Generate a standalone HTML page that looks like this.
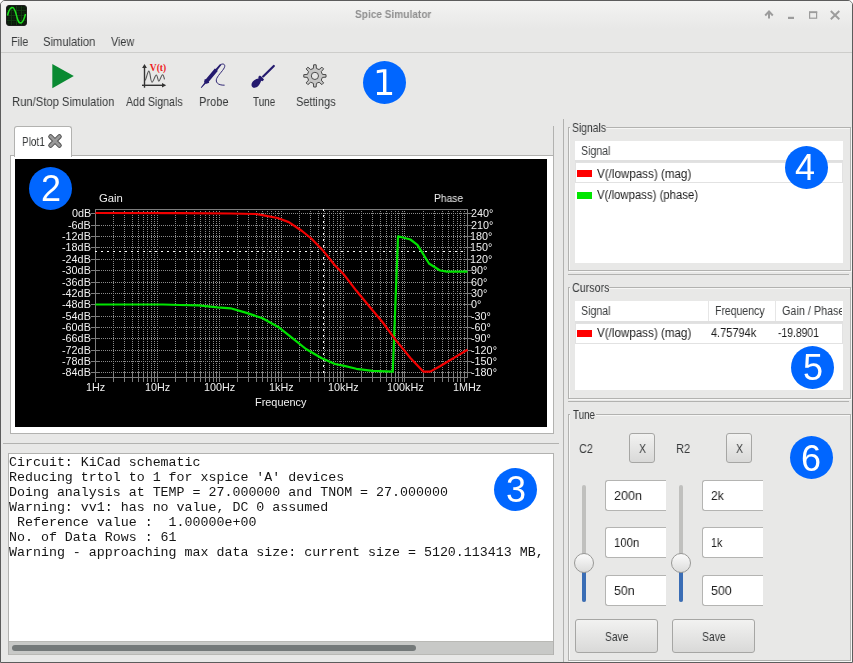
<!DOCTYPE html>
<html><head><meta charset="utf-8"><style>
html,body{margin:0;padding:0;width:853px;height:663px;overflow:hidden;background:#fff;}
.r{position:absolute;box-sizing:content-box;}
.t{position:absolute;white-space:nowrap;line-height:1;font-family:'Liberation Sans', sans-serif;will-change:transform;}
</style></head><body>
<div class="r" style="left:0;top:0;width:851px;height:661px;border:1px solid #5c5c5c;border-radius:5px 5px 0 0;background:#e8e8e7;"></div>
<div class="r" style="left:1px;top:1px;width:851px;height:28px;border-radius:4px 4px 0 0;background:linear-gradient(#f3f3f2,#e8e8e7);"></div>
<svg class="r" style="left:6px;top:5px" width="21" height="21" viewBox="0 0 21 21">
<rect x="0.5" y="0.5" width="20" height="20" rx="2.5" fill="#0a140a" stroke="#202020"/>
<g stroke="#134013"><line x1="2.8" y1="1" x2="2.8" y2="20" stroke-width="0.4"/><line x1="1" y1="2.8" x2="20" y2="2.8" stroke-width="0.4"/><line x1="5.4" y1="1" x2="5.4" y2="20" stroke-width="0.9"/><line x1="1" y1="5.4" x2="20" y2="5.4" stroke-width="0.9"/><line x1="7.9" y1="1" x2="7.9" y2="20" stroke-width="0.4"/><line x1="1" y1="7.9" x2="20" y2="7.9" stroke-width="0.4"/><line x1="10.5" y1="1" x2="10.5" y2="20" stroke-width="0.9"/><line x1="1" y1="10.5" x2="20" y2="10.5" stroke-width="0.9"/><line x1="12.9" y1="1" x2="12.9" y2="20" stroke-width="0.4"/><line x1="1" y1="12.9" x2="20" y2="12.9" stroke-width="0.4"/><line x1="15.4" y1="1" x2="15.4" y2="20" stroke-width="0.9"/><line x1="1" y1="15.4" x2="20" y2="15.4" stroke-width="0.9"/><line x1="17.9" y1="1" x2="17.9" y2="20" stroke-width="0.4"/><line x1="1" y1="17.9" x2="20" y2="17.9" stroke-width="0.4"/></g>
<path d="M1.5,10.5 C3,4 4.5,2.5 6.5,2.5 C9,2.5 10,9 11.5,14 C12.5,17.5 13.5,18 14.5,18 C16.5,18 18,15 19.5,9" fill="none" stroke="#1ee01e" stroke-width="1.5"/>
</svg>
<div class="t" style="left:354.91px;top:9.37px;font-size:10.9px;color:#8f8f8f;font-weight:bold;font-family:'Liberation Sans', sans-serif;letter-spacing:0px;transform:scaleX(0.9280);transform-origin:0 0;">Spice Simulator</div>
<svg class="r" style="left:760px;top:6px" width="85" height="18" viewBox="0 0 85 18">
<g fill="none" stroke="#9c9c9c">
<path d="M9,12.5 V6.5" stroke-width="2"/><path d="M5.2,9.5 L9,5.5 L12.8,9.5" stroke-width="1.9"/>
<path d="M28,11.9 H34" stroke-width="2.2"/>
<rect x="49.6" y="6" width="7" height="6.2" stroke-width="1.2"/><path d="M49,6.3 H57.2" stroke-width="1.6"/>
<path d="M70.8,5 L79.3,13.3 M79.3,5 L70.8,13.3" stroke-width="1.9"/>
</g></svg>
<div class="t" style="left:10.87px;top:34.99px;font-size:13px;color:#383a3b;font-weight:normal;font-family:'Liberation Sans', sans-serif;letter-spacing:0px;transform:scaleX(0.8263);transform-origin:0 0;">File</div>
<div class="t" style="left:43.49px;top:34.99px;font-size:13px;color:#383a3b;font-weight:normal;font-family:'Liberation Sans', sans-serif;letter-spacing:0px;transform:scaleX(0.8606);transform-origin:0 0;">Simulation</div>
<div class="t" style="left:111.05px;top:34.99px;font-size:13px;color:#383a3b;font-weight:normal;font-family:'Liberation Sans', sans-serif;letter-spacing:0px;transform:scaleX(0.8312);transform-origin:0 0;">View</div>
<div class="r" style="left:1px;top:52px;width:851px;height:1px;background:#cdcdcb"></div>
<svg class="r" style="left:52px;top:64px" width="22" height="25"><path d="M0.3,0 L21.8,12.1 L0.3,24.3 Z" fill="#0a8a32"/></svg>
<svg class="r" style="left:138px;top:60px" width="32" height="32" viewBox="0 0 32 32">
<g stroke="#333" stroke-width="1.4" fill="none">
<path d="M6.5,27.7 V6"/><path d="M4,25.3 H25.5"/>
</g>
<path d="M4.1,7.9 L6.5,3.9 L8.9,7.9 Z M24,23 L28.2,25.3 L24,27.6 Z" fill="#333"/>
<path d="M7,20.3 C8.5,19 9.5,11 10.9,11.1 C12.3,11.2 12.5,22.2 14,22.2 C15.5,22.2 17,15 18.3,15 C19.6,15 19.8,21.2 20.8,21.2 C22,21.2 23.2,14.7 24.6,14.7 C25.6,14.7 26,17.5 26.5,19.3" fill="none" stroke="#555" stroke-width="1.1"/>
<text x="11.8" y="11.3" font-family="Liberation Serif" font-weight="bold" font-size="10.2" fill="#ee1c1c" textLength="16.4" lengthAdjust="spacingAndGlyphs">V(t)</text>
</svg>
<svg class="r" style="left:198px;top:60px" width="32" height="32" viewBox="0 0 32 32">
<path d="M22.4,4.8 C24.5,3.4 27.2,3.8 26.7,6.6 C26.2,9.5 20.5,14.5 18.7,18.5 C17.2,22 19.5,25.3 26.6,25.2" fill="none" stroke="#241a6e" stroke-width="0.95"/>
<g transform="translate(3.1,27.8) rotate(-49.8)">
<path d="M0,-0.4 L6,-0.8 L6.5,-1.6 L9.2,-2.9 L9.6,-1.9 L23.5,-1.9 L23.8,-1.1 L30.4,-0.8 L30.4,0.8 L23.8,1.1 L23.5,1.9 L9.6,1.9 L9.2,2.9 L6.5,1.6 L6,0.8 L0,0.4 Z" fill="#241a6e"/>
</g>
</svg>
<svg class="r" style="left:248px;top:60px" width="32" height="32" viewBox="0 0 32 32">
<g transform="translate(4.2,27.1) rotate(-44.3)" fill="#241a6e">
<path d="M0.2,0 C0.2,-2.4 2.8,-3.5 5,-3.5 C7.2,-3.5 9,-2.6 10.8,-1.7 L11.3,-3 L13.6,-3 L13.9,-1.2 L13.9,1.2 L13.6,3 L11.3,3 L10.8,1.7 C9,2.6 7.2,3.5 5,3.5 C2.8,3.5 0.2,2.4 0.2,0 Z"/>
<path d="M15.3,0 L30.2,0" stroke="#241a6e" stroke-width="2.2" stroke-linecap="round"/>
</g>
</svg>
<svg class="r" style="left:298px;top:60px" width="34" height="32" viewBox="0 0 34 32">
<path d="M15.39,8.45 L15.67,4.77 L18.13,4.77 L18.41,8.45 L21.10,9.57 L23.90,7.16 L25.64,8.90 L23.23,11.70 L24.35,14.39 L28.03,14.67 L28.03,17.13 L24.35,17.41 L23.23,20.10 L25.64,22.90 L23.90,24.64 L21.10,22.23 L18.41,23.35 L18.13,27.03 L15.67,27.03 L15.39,23.35 L12.70,22.23 L9.90,24.64 L8.16,22.90 L10.57,20.10 L9.45,17.41 L5.77,17.13 L5.77,14.67 L9.45,14.39 L10.57,11.70 L8.16,8.90 L9.90,7.16 L12.70,9.57Z" fill="#c6c6c5" stroke="#4a4a4a" stroke-width="1" stroke-linejoin="round"/>
<circle cx="16.9" cy="15.9" r="3.6" fill="#e6e6e5" stroke="#4a4a4a" stroke-width="1"/>
</svg>
<div class="t" style="left:12.48px;top:94.99px;font-size:13px;color:#383a3b;font-weight:normal;font-family:'Liberation Sans', sans-serif;letter-spacing:0px;transform:scaleX(0.8645);transform-origin:0 0;">Run/Stop Simulation</div>
<div class="t" style="left:125.68px;top:94.99px;font-size:13px;color:#383a3b;font-weight:normal;font-family:'Liberation Sans', sans-serif;letter-spacing:0px;transform:scaleX(0.8159);transform-origin:0 0;">Add Signals</div>
<div class="t" style="left:198.79px;top:94.99px;font-size:13px;color:#383a3b;font-weight:normal;font-family:'Liberation Sans', sans-serif;letter-spacing:0px;transform:scaleX(0.8503);transform-origin:0 0;">Probe</div>
<div class="t" style="left:253.38px;top:94.99px;font-size:13px;color:#383a3b;font-weight:normal;font-family:'Liberation Sans', sans-serif;letter-spacing:0px;transform:scaleX(0.7614);transform-origin:0 0;">Tune</div>
<div class="t" style="left:295.70px;top:94.99px;font-size:13px;color:#383a3b;font-weight:normal;font-family:'Liberation Sans', sans-serif;letter-spacing:0px;transform:scaleX(0.8429);transform-origin:0 0;">Settings</div>
<div class="r" style="left:553px;top:126px;width:1px;height:308px;background:#b2b2b0"></div>
<div class="r" style="left:10px;top:155px;width:542px;height:277px;background:#fff;border:1px solid #b2b2b0;border-right:none"></div>
<div class="r" style="left:14px;top:126px;width:56px;height:30px;background:#fff;border:1px solid #b2b2b0;border-bottom:none;border-radius:3px 3px 0 0"></div>
<div class="t" style="left:21.78px;top:134.99px;font-size:13px;color:#383a3b;font-weight:normal;font-family:'Liberation Sans', sans-serif;letter-spacing:0px;transform:scaleX(0.7698);transform-origin:0 0;">Plot1</div>
<svg class="r" style="left:47px;top:133px" width="16" height="16" viewBox="0 0 16 16">
<path d="M3.6,3.6 L12.4,12.4 M12.4,3.6 L3.6,12.4" stroke="#505050" stroke-width="4.8" stroke-linecap="round"/>
<path d="M3.6,3.6 L12.4,12.4 M12.4,3.6 L3.6,12.4" stroke="#999" stroke-width="2.8" stroke-linecap="round"/>
</svg>
<div class="r" style="left:15px;top:159px;width:532px;height:268px;background:#000"></div>
<svg class="r" style="left:0;top:0" width="853" height="663" shape-rendering="crispEdges"><line x1="113.5" y1="211" x2="113.5" y2="377" stroke="#8a8a8a" stroke-dasharray="1 1"/><line x1="113.5" y1="371" x2="113.5" y2="382" stroke="#7c7c7c"/><line x1="124.5" y1="211" x2="124.5" y2="377" stroke="#8a8a8a" stroke-dasharray="1 1"/><line x1="124.5" y1="371" x2="124.5" y2="382" stroke="#7c7c7c"/><line x1="132.5" y1="211" x2="132.5" y2="377" stroke="#8a8a8a" stroke-dasharray="1 1"/><line x1="132.5" y1="371" x2="132.5" y2="382" stroke="#7c7c7c"/><line x1="138.5" y1="211" x2="138.5" y2="377" stroke="#8a8a8a" stroke-dasharray="1 1"/><line x1="138.5" y1="371" x2="138.5" y2="382" stroke="#7c7c7c"/><line x1="143.5" y1="211" x2="143.5" y2="377" stroke="#8a8a8a" stroke-dasharray="1 1"/><line x1="143.5" y1="371" x2="143.5" y2="382" stroke="#7c7c7c"/><line x1="147.5" y1="211" x2="147.5" y2="377" stroke="#8a8a8a" stroke-dasharray="1 1"/><line x1="147.5" y1="371" x2="147.5" y2="382" stroke="#7c7c7c"/><line x1="151.5" y1="211" x2="151.5" y2="377" stroke="#8a8a8a" stroke-dasharray="1 1"/><line x1="151.5" y1="371" x2="151.5" y2="382" stroke="#7c7c7c"/><line x1="154.5" y1="211" x2="154.5" y2="377" stroke="#8a8a8a" stroke-dasharray="1 1"/><line x1="154.5" y1="371" x2="154.5" y2="382" stroke="#7c7c7c"/><line x1="157.5" y1="211" x2="157.5" y2="377" stroke="#8a8a8a" stroke-dasharray="1 1"/><line x1="157.5" y1="371" x2="157.5" y2="382" stroke="#7c7c7c"/><line x1="175.5" y1="211" x2="175.5" y2="377" stroke="#8a8a8a" stroke-dasharray="1 1"/><line x1="175.5" y1="371" x2="175.5" y2="382" stroke="#7c7c7c"/><line x1="186.5" y1="211" x2="186.5" y2="377" stroke="#8a8a8a" stroke-dasharray="1 1"/><line x1="186.5" y1="371" x2="186.5" y2="382" stroke="#7c7c7c"/><line x1="194.5" y1="211" x2="194.5" y2="377" stroke="#8a8a8a" stroke-dasharray="1 1"/><line x1="194.5" y1="371" x2="194.5" y2="382" stroke="#7c7c7c"/><line x1="200.5" y1="211" x2="200.5" y2="377" stroke="#8a8a8a" stroke-dasharray="1 1"/><line x1="200.5" y1="371" x2="200.5" y2="382" stroke="#7c7c7c"/><line x1="205.5" y1="211" x2="205.5" y2="377" stroke="#8a8a8a" stroke-dasharray="1 1"/><line x1="205.5" y1="371" x2="205.5" y2="382" stroke="#7c7c7c"/><line x1="209.5" y1="211" x2="209.5" y2="377" stroke="#8a8a8a" stroke-dasharray="1 1"/><line x1="209.5" y1="371" x2="209.5" y2="382" stroke="#7c7c7c"/><line x1="213.5" y1="211" x2="213.5" y2="377" stroke="#8a8a8a" stroke-dasharray="1 1"/><line x1="213.5" y1="371" x2="213.5" y2="382" stroke="#7c7c7c"/><line x1="216.5" y1="211" x2="216.5" y2="377" stroke="#8a8a8a" stroke-dasharray="1 1"/><line x1="216.5" y1="371" x2="216.5" y2="382" stroke="#7c7c7c"/><line x1="219.5" y1="211" x2="219.5" y2="377" stroke="#8a8a8a" stroke-dasharray="1 1"/><line x1="219.5" y1="371" x2="219.5" y2="382" stroke="#7c7c7c"/><line x1="237.5" y1="211" x2="237.5" y2="377" stroke="#8a8a8a" stroke-dasharray="1 1"/><line x1="237.5" y1="371" x2="237.5" y2="382" stroke="#7c7c7c"/><line x1="248.5" y1="211" x2="248.5" y2="377" stroke="#8a8a8a" stroke-dasharray="1 1"/><line x1="248.5" y1="371" x2="248.5" y2="382" stroke="#7c7c7c"/><line x1="256.5" y1="211" x2="256.5" y2="377" stroke="#8a8a8a" stroke-dasharray="1 1"/><line x1="256.5" y1="371" x2="256.5" y2="382" stroke="#7c7c7c"/><line x1="262.5" y1="211" x2="262.5" y2="377" stroke="#8a8a8a" stroke-dasharray="1 1"/><line x1="262.5" y1="371" x2="262.5" y2="382" stroke="#7c7c7c"/><line x1="267.5" y1="211" x2="267.5" y2="377" stroke="#8a8a8a" stroke-dasharray="1 1"/><line x1="267.5" y1="371" x2="267.5" y2="382" stroke="#7c7c7c"/><line x1="271.5" y1="211" x2="271.5" y2="377" stroke="#8a8a8a" stroke-dasharray="1 1"/><line x1="271.5" y1="371" x2="271.5" y2="382" stroke="#7c7c7c"/><line x1="275.5" y1="211" x2="275.5" y2="377" stroke="#8a8a8a" stroke-dasharray="1 1"/><line x1="275.5" y1="371" x2="275.5" y2="382" stroke="#7c7c7c"/><line x1="278.5" y1="211" x2="278.5" y2="377" stroke="#8a8a8a" stroke-dasharray="1 1"/><line x1="278.5" y1="371" x2="278.5" y2="382" stroke="#7c7c7c"/><line x1="281.5" y1="211" x2="281.5" y2="377" stroke="#8a8a8a" stroke-dasharray="1 1"/><line x1="281.5" y1="371" x2="281.5" y2="382" stroke="#7c7c7c"/><line x1="299.5" y1="211" x2="299.5" y2="377" stroke="#8a8a8a" stroke-dasharray="1 1"/><line x1="299.5" y1="371" x2="299.5" y2="382" stroke="#7c7c7c"/><line x1="310.5" y1="211" x2="310.5" y2="377" stroke="#8a8a8a" stroke-dasharray="1 1"/><line x1="310.5" y1="371" x2="310.5" y2="382" stroke="#7c7c7c"/><line x1="318.5" y1="211" x2="318.5" y2="377" stroke="#8a8a8a" stroke-dasharray="1 1"/><line x1="318.5" y1="371" x2="318.5" y2="382" stroke="#7c7c7c"/><line x1="324.5" y1="211" x2="324.5" y2="377" stroke="#8a8a8a" stroke-dasharray="1 1"/><line x1="324.5" y1="371" x2="324.5" y2="382" stroke="#7c7c7c"/><line x1="329.5" y1="211" x2="329.5" y2="377" stroke="#8a8a8a" stroke-dasharray="1 1"/><line x1="329.5" y1="371" x2="329.5" y2="382" stroke="#7c7c7c"/><line x1="333.5" y1="211" x2="333.5" y2="377" stroke="#8a8a8a" stroke-dasharray="1 1"/><line x1="333.5" y1="371" x2="333.5" y2="382" stroke="#7c7c7c"/><line x1="337.5" y1="211" x2="337.5" y2="377" stroke="#8a8a8a" stroke-dasharray="1 1"/><line x1="337.5" y1="371" x2="337.5" y2="382" stroke="#7c7c7c"/><line x1="340.5" y1="211" x2="340.5" y2="377" stroke="#8a8a8a" stroke-dasharray="1 1"/><line x1="340.5" y1="371" x2="340.5" y2="382" stroke="#7c7c7c"/><line x1="343.5" y1="211" x2="343.5" y2="377" stroke="#8a8a8a" stroke-dasharray="1 1"/><line x1="343.5" y1="371" x2="343.5" y2="382" stroke="#7c7c7c"/><line x1="361.5" y1="211" x2="361.5" y2="377" stroke="#8a8a8a" stroke-dasharray="1 1"/><line x1="361.5" y1="371" x2="361.5" y2="382" stroke="#7c7c7c"/><line x1="372.5" y1="211" x2="372.5" y2="377" stroke="#8a8a8a" stroke-dasharray="1 1"/><line x1="372.5" y1="371" x2="372.5" y2="382" stroke="#7c7c7c"/><line x1="380.5" y1="211" x2="380.5" y2="377" stroke="#8a8a8a" stroke-dasharray="1 1"/><line x1="380.5" y1="371" x2="380.5" y2="382" stroke="#7c7c7c"/><line x1="386.5" y1="211" x2="386.5" y2="377" stroke="#8a8a8a" stroke-dasharray="1 1"/><line x1="386.5" y1="371" x2="386.5" y2="382" stroke="#7c7c7c"/><line x1="391.5" y1="211" x2="391.5" y2="377" stroke="#8a8a8a" stroke-dasharray="1 1"/><line x1="391.5" y1="371" x2="391.5" y2="382" stroke="#7c7c7c"/><line x1="395.5" y1="211" x2="395.5" y2="377" stroke="#8a8a8a" stroke-dasharray="1 1"/><line x1="395.5" y1="371" x2="395.5" y2="382" stroke="#7c7c7c"/><line x1="398.5" y1="211" x2="398.5" y2="377" stroke="#8a8a8a" stroke-dasharray="1 1"/><line x1="398.5" y1="371" x2="398.5" y2="382" stroke="#7c7c7c"/><line x1="402.5" y1="211" x2="402.5" y2="377" stroke="#8a8a8a" stroke-dasharray="1 1"/><line x1="402.5" y1="371" x2="402.5" y2="382" stroke="#7c7c7c"/><line x1="404.5" y1="211" x2="404.5" y2="377" stroke="#8a8a8a" stroke-dasharray="1 1"/><line x1="404.5" y1="371" x2="404.5" y2="382" stroke="#7c7c7c"/><line x1="423.5" y1="211" x2="423.5" y2="377" stroke="#8a8a8a" stroke-dasharray="1 1"/><line x1="423.5" y1="371" x2="423.5" y2="382" stroke="#7c7c7c"/><line x1="434.5" y1="211" x2="434.5" y2="377" stroke="#8a8a8a" stroke-dasharray="1 1"/><line x1="434.5" y1="371" x2="434.5" y2="382" stroke="#7c7c7c"/><line x1="442.5" y1="211" x2="442.5" y2="377" stroke="#8a8a8a" stroke-dasharray="1 1"/><line x1="442.5" y1="371" x2="442.5" y2="382" stroke="#7c7c7c"/><line x1="448.5" y1="211" x2="448.5" y2="377" stroke="#8a8a8a" stroke-dasharray="1 1"/><line x1="448.5" y1="371" x2="448.5" y2="382" stroke="#7c7c7c"/><line x1="453.5" y1="211" x2="453.5" y2="377" stroke="#8a8a8a" stroke-dasharray="1 1"/><line x1="453.5" y1="371" x2="453.5" y2="382" stroke="#7c7c7c"/><line x1="457.5" y1="211" x2="457.5" y2="377" stroke="#8a8a8a" stroke-dasharray="1 1"/><line x1="457.5" y1="371" x2="457.5" y2="382" stroke="#7c7c7c"/><line x1="460.5" y1="211" x2="460.5" y2="377" stroke="#8a8a8a" stroke-dasharray="1 1"/><line x1="460.5" y1="371" x2="460.5" y2="382" stroke="#7c7c7c"/><line x1="464.5" y1="211" x2="464.5" y2="377" stroke="#8a8a8a" stroke-dasharray="1 1"/><line x1="464.5" y1="371" x2="464.5" y2="382" stroke="#7c7c7c"/><line x1="97" y1="213.5" x2="467" y2="213.5" stroke="#8a8a8a" stroke-dasharray="1 1"/><line x1="91" y1="213.5" x2="100" y2="213.5" stroke="#7c7c7c"/><line x1="463" y1="213.5" x2="472" y2="213.5" stroke="#7c7c7c"/><line x1="97" y1="225.5" x2="467" y2="225.5" stroke="#8a8a8a" stroke-dasharray="1 1"/><line x1="91" y1="225.5" x2="100" y2="225.5" stroke="#7c7c7c"/><line x1="463" y1="225.5" x2="472" y2="225.5" stroke="#7c7c7c"/><line x1="97" y1="236.5" x2="467" y2="236.5" stroke="#8a8a8a" stroke-dasharray="1 1"/><line x1="91" y1="236.5" x2="100" y2="236.5" stroke="#7c7c7c"/><line x1="463" y1="236.5" x2="472" y2="236.5" stroke="#7c7c7c"/><line x1="97" y1="247.5" x2="467" y2="247.5" stroke="#8a8a8a" stroke-dasharray="1 1"/><line x1="91" y1="247.5" x2="100" y2="247.5" stroke="#7c7c7c"/><line x1="463" y1="247.5" x2="472" y2="247.5" stroke="#7c7c7c"/><line x1="97" y1="259.5" x2="467" y2="259.5" stroke="#8a8a8a" stroke-dasharray="1 1"/><line x1="91" y1="259.5" x2="100" y2="259.5" stroke="#7c7c7c"/><line x1="463" y1="259.5" x2="472" y2="259.5" stroke="#7c7c7c"/><line x1="97" y1="270.5" x2="467" y2="270.5" stroke="#8a8a8a" stroke-dasharray="1 1"/><line x1="91" y1="270.5" x2="100" y2="270.5" stroke="#7c7c7c"/><line x1="463" y1="270.5" x2="472" y2="270.5" stroke="#7c7c7c"/><line x1="97" y1="282.5" x2="467" y2="282.5" stroke="#8a8a8a" stroke-dasharray="1 1"/><line x1="91" y1="282.5" x2="100" y2="282.5" stroke="#7c7c7c"/><line x1="463" y1="282.5" x2="472" y2="282.5" stroke="#7c7c7c"/><line x1="97" y1="293.5" x2="467" y2="293.5" stroke="#8a8a8a" stroke-dasharray="1 1"/><line x1="91" y1="293.5" x2="100" y2="293.5" stroke="#7c7c7c"/><line x1="463" y1="293.5" x2="472" y2="293.5" stroke="#7c7c7c"/><line x1="97" y1="304.5" x2="467" y2="304.5" stroke="#8a8a8a" stroke-dasharray="1 1"/><line x1="91" y1="304.5" x2="100" y2="304.5" stroke="#7c7c7c"/><line x1="463" y1="304.5" x2="472" y2="304.5" stroke="#7c7c7c"/><line x1="97" y1="316.5" x2="467" y2="316.5" stroke="#8a8a8a" stroke-dasharray="1 1"/><line x1="91" y1="316.5" x2="100" y2="316.5" stroke="#7c7c7c"/><line x1="463" y1="316.5" x2="472" y2="316.5" stroke="#7c7c7c"/><line x1="97" y1="327.5" x2="467" y2="327.5" stroke="#8a8a8a" stroke-dasharray="1 1"/><line x1="91" y1="327.5" x2="100" y2="327.5" stroke="#7c7c7c"/><line x1="463" y1="327.5" x2="472" y2="327.5" stroke="#7c7c7c"/><line x1="97" y1="338.5" x2="467" y2="338.5" stroke="#8a8a8a" stroke-dasharray="1 1"/><line x1="91" y1="338.5" x2="100" y2="338.5" stroke="#7c7c7c"/><line x1="463" y1="338.5" x2="472" y2="338.5" stroke="#7c7c7c"/><line x1="97" y1="350.5" x2="467" y2="350.5" stroke="#8a8a8a" stroke-dasharray="1 1"/><line x1="91" y1="350.5" x2="100" y2="350.5" stroke="#7c7c7c"/><line x1="463" y1="350.5" x2="472" y2="350.5" stroke="#7c7c7c"/><line x1="97" y1="361.5" x2="467" y2="361.5" stroke="#8a8a8a" stroke-dasharray="1 1"/><line x1="91" y1="361.5" x2="100" y2="361.5" stroke="#7c7c7c"/><line x1="463" y1="361.5" x2="472" y2="361.5" stroke="#7c7c7c"/><line x1="97" y1="372.5" x2="467" y2="372.5" stroke="#8a8a8a" stroke-dasharray="1 1"/><line x1="91" y1="372.5" x2="100" y2="372.5" stroke="#7c7c7c"/><line x1="463" y1="372.5" x2="472" y2="372.5" stroke="#7c7c7c"/><rect x="95.5" y="209.5" width="372" height="168" fill="none" stroke="#7c7c7c"/><line x1="95.5" y1="377" x2="95.5" y2="382" stroke="#7c7c7c"/><line x1="323.5" y1="209" x2="323.5" y2="377" stroke="#fff" stroke-dasharray="2 4" stroke-width="1.4"/><line x1="95" y1="251.5" x2="467" y2="251.5" stroke="#fff" stroke-dasharray="2 4" stroke-width="1.4"/></svg>
<svg class="r" style="left:0;top:0" width="853" height="663"><polyline fill="none" stroke="#00e400" stroke-width="2.2" stroke-linejoin="round" points="95.5,304.5 163,304.5 180,305 198.8,305.4 217.5,307.3 230.6,308.3 245.7,312.6 262.5,318.2 279.5,327.8 292.7,338.4 306,349 321.8,358.2 335,364 343.2,365.6 356.4,368.8 372.3,370.9 392.8,371.6 398,236.3 410.4,239.5 417.4,244.8 423.2,254.2 429,263.5 440,270.5 447,271.6 467.5,271.6"/><polyline fill="none" stroke="#f20000" stroke-width="2.2" stroke-linejoin="round" points="95.5,213 180,213.1 230.6,213.5 256,214 262.5,215.2 277.6,218.0 288.8,222.1 302,231 311.3,238.5 323.9,251.6 335,265.5 343.2,273.7 356.4,290.8 369.6,306.7 382.8,322.5 395.2,339.4 410.4,358 423.2,371.6 430.2,371.6 440,366.3 446.2,362.5 456.8,356.1 467.5,349.7"/></svg>
<div class="t" style="left:71.63px;top:207.92px;font-size:10.6px;color:#f0f0f0;transform:scaleX(1.02);transform-origin:0 0;">0dB</div>
<div class="t" style="left:68.03px;top:219.92px;font-size:10.6px;color:#f0f0f0;transform:scaleX(1.02);transform-origin:0 0;">-6dB</div>
<div class="t" style="left:62.02px;top:230.92px;font-size:10.6px;color:#f0f0f0;transform:scaleX(1.02);transform-origin:0 0;">-12dB</div>
<div class="t" style="left:62.02px;top:241.92px;font-size:10.6px;color:#f0f0f0;transform:scaleX(1.02);transform-origin:0 0;">-18dB</div>
<div class="t" style="left:62.02px;top:253.92px;font-size:10.6px;color:#f0f0f0;transform:scaleX(1.02);transform-origin:0 0;">-24dB</div>
<div class="t" style="left:62.02px;top:264.92px;font-size:10.6px;color:#f0f0f0;transform:scaleX(1.02);transform-origin:0 0;">-30dB</div>
<div class="t" style="left:62.02px;top:276.92px;font-size:10.6px;color:#f0f0f0;transform:scaleX(1.02);transform-origin:0 0;">-36dB</div>
<div class="t" style="left:62.02px;top:287.92px;font-size:10.6px;color:#f0f0f0;transform:scaleX(1.02);transform-origin:0 0;">-42dB</div>
<div class="t" style="left:62.02px;top:298.92px;font-size:10.6px;color:#f0f0f0;transform:scaleX(1.02);transform-origin:0 0;">-48dB</div>
<div class="t" style="left:62.02px;top:310.92px;font-size:10.6px;color:#f0f0f0;transform:scaleX(1.02);transform-origin:0 0;">-54dB</div>
<div class="t" style="left:62.02px;top:321.92px;font-size:10.6px;color:#f0f0f0;transform:scaleX(1.02);transform-origin:0 0;">-60dB</div>
<div class="t" style="left:62.02px;top:332.92px;font-size:10.6px;color:#f0f0f0;transform:scaleX(1.02);transform-origin:0 0;">-66dB</div>
<div class="t" style="left:62.02px;top:344.92px;font-size:10.6px;color:#f0f0f0;transform:scaleX(1.02);transform-origin:0 0;">-72dB</div>
<div class="t" style="left:62.02px;top:355.92px;font-size:10.6px;color:#f0f0f0;transform:scaleX(1.02);transform-origin:0 0;">-78dB</div>
<div class="t" style="left:62.02px;top:366.92px;font-size:10.6px;color:#f0f0f0;transform:scaleX(1.02);transform-origin:0 0;">-84dB</div>
<div class="t" style="left:470.66px;top:207.92px;font-size:10.6px;color:#f0f0f0;transform:scaleX(1.02);transform-origin:0 0;">240°</div>
<div class="t" style="left:470.66px;top:219.92px;font-size:10.6px;color:#f0f0f0;transform:scaleX(1.02);transform-origin:0 0;">210°</div>
<div class="t" style="left:470.38px;top:230.92px;font-size:10.6px;color:#f0f0f0;transform:scaleX(1.02);transform-origin:0 0;">180°</div>
<div class="t" style="left:470.38px;top:241.92px;font-size:10.6px;color:#f0f0f0;transform:scaleX(1.02);transform-origin:0 0;">150°</div>
<div class="t" style="left:470.38px;top:253.92px;font-size:10.6px;color:#f0f0f0;transform:scaleX(1.02);transform-origin:0 0;">120°</div>
<div class="t" style="left:470.69px;top:264.92px;font-size:10.6px;color:#f0f0f0;transform:scaleX(1.02);transform-origin:0 0;">90°</div>
<div class="t" style="left:470.65px;top:276.92px;font-size:10.6px;color:#f0f0f0;transform:scaleX(1.02);transform-origin:0 0;">60°</div>
<div class="t" style="left:470.79px;top:287.92px;font-size:10.6px;color:#f0f0f0;transform:scaleX(1.02);transform-origin:0 0;">30°</div>
<div class="t" style="left:470.78px;top:298.92px;font-size:10.6px;color:#f0f0f0;transform:scaleX(1.02);transform-origin:0 0;">0°</div>
<div class="t" style="left:470.72px;top:310.92px;font-size:10.6px;color:#f0f0f0;transform:scaleX(1.02);transform-origin:0 0;">-30°</div>
<div class="t" style="left:470.72px;top:321.92px;font-size:10.6px;color:#f0f0f0;transform:scaleX(1.02);transform-origin:0 0;">-60°</div>
<div class="t" style="left:470.72px;top:332.92px;font-size:10.6px;color:#f0f0f0;transform:scaleX(1.02);transform-origin:0 0;">-90°</div>
<div class="t" style="left:470.72px;top:344.92px;font-size:10.6px;color:#f0f0f0;transform:scaleX(1.02);transform-origin:0 0;">-120°</div>
<div class="t" style="left:470.72px;top:355.92px;font-size:10.6px;color:#f0f0f0;transform:scaleX(1.02);transform-origin:0 0;">-150°</div>
<div class="t" style="left:470.72px;top:366.92px;font-size:10.6px;color:#f0f0f0;transform:scaleX(1.02);transform-origin:0 0;">-180°</div>
<div class="t" style="left:85.84px;top:381.82px;font-size:10.6px;color:#f0f0f0;transform:scaleX(1.02);transform-origin:0 0;">1Hz</div>
<div class="t" style="left:144.77px;top:381.82px;font-size:10.6px;color:#f0f0f0;transform:scaleX(1.02);transform-origin:0 0;">10Hz</div>
<div class="t" style="left:203.69px;top:381.82px;font-size:10.6px;color:#f0f0f0;transform:scaleX(1.02);transform-origin:0 0;">100Hz</div>
<div class="t" style="left:268.93px;top:381.82px;font-size:10.6px;color:#f0f0f0;transform:scaleX(1.02);transform-origin:0 0;">1kHz</div>
<div class="t" style="left:327.85px;top:381.82px;font-size:10.6px;color:#f0f0f0;transform:scaleX(1.02);transform-origin:0 0;">10kHz</div>
<div class="t" style="left:386.78px;top:381.82px;font-size:10.6px;color:#f0f0f0;transform:scaleX(1.02);transform-origin:0 0;">100kHz</div>
<div class="t" style="left:452.92px;top:381.82px;font-size:10.6px;color:#f0f0f0;transform:scaleX(1.02);transform-origin:0 0;">1MHz</div>
<div class="t" style="left:98.83px;top:192.82px;font-size:10.6px;color:#f0f0f0;font-weight:normal;font-family:'Liberation Sans', sans-serif;letter-spacing:0px;transform:scaleX(1.0676);transform-origin:0 0;">Gain</div>
<div class="t" style="left:433.76px;top:193.02px;font-size:10.6px;color:#f0f0f0;font-weight:normal;font-family:'Liberation Sans', sans-serif;letter-spacing:0px;transform:scaleX(0.9681);transform-origin:0 0;">Phase</div>
<div class="t" style="left:254.61px;top:396.72px;font-size:10.6px;color:#f0f0f0;font-weight:normal;font-family:'Liberation Sans', sans-serif;letter-spacing:0px;transform:scaleX(1.0287);transform-origin:0 0;">Frequency</div>
<div class="r" style="left:3px;top:443px;width:556px;height:1px;background:#b2b2b0"></div>
<div class="r" style="left:8px;top:453px;width:544px;height:201px;background:#fff;border:1px solid #b2b2b0;border-bottom:none"></div>
<div class="t" style="left:9.20px;top:455.81px;font-size:13.3px;color:#151515;font-weight:normal;font-family:'Liberation Mono', monospace;letter-spacing:0px;white-space:pre;">Circuit:&nbsp;KiCad&nbsp;schematic</div>
<div class="t" style="left:9.20px;top:470.85px;font-size:13.3px;color:#151515;font-weight:normal;font-family:'Liberation Mono', monospace;letter-spacing:0px;white-space:pre;">Reducing&nbsp;trtol&nbsp;to&nbsp;1&nbsp;for&nbsp;xspice&nbsp;&#39;A&#39;&nbsp;devices</div>
<div class="t" style="left:9.20px;top:485.89px;font-size:13.3px;color:#151515;font-weight:normal;font-family:'Liberation Mono', monospace;letter-spacing:0px;white-space:pre;">Doing&nbsp;analysis&nbsp;at&nbsp;TEMP&nbsp;=&nbsp;27.000000&nbsp;and&nbsp;TNOM&nbsp;=&nbsp;27.000000</div>
<div class="t" style="left:9.20px;top:500.93px;font-size:13.3px;color:#151515;font-weight:normal;font-family:'Liberation Mono', monospace;letter-spacing:0px;white-space:pre;">Warning:&nbsp;vv1:&nbsp;has&nbsp;no&nbsp;value,&nbsp;DC&nbsp;0&nbsp;assumed</div>
<div class="t" style="left:9.20px;top:515.97px;font-size:13.3px;color:#151515;font-weight:normal;font-family:'Liberation Mono', monospace;letter-spacing:0px;white-space:pre;">&nbsp;Reference&nbsp;value&nbsp;:&nbsp;&nbsp;1.00000e+00</div>
<div class="t" style="left:9.20px;top:531.01px;font-size:13.3px;color:#151515;font-weight:normal;font-family:'Liberation Mono', monospace;letter-spacing:0px;white-space:pre;">No.&nbsp;of&nbsp;Data&nbsp;Rows&nbsp;:&nbsp;61</div>
<div class="t" style="left:9.20px;top:546.05px;font-size:13.3px;color:#151515;font-weight:normal;font-family:'Liberation Mono', monospace;letter-spacing:0px;white-space:pre;">Warning&nbsp;-&nbsp;approaching&nbsp;max&nbsp;data&nbsp;size:&nbsp;current&nbsp;size&nbsp;=&nbsp;5120.113413&nbsp;MB,</div>
<div class="r" style="left:9px;top:641px;width:544px;height:14px;background:#c8c9c7;border-top:1px solid #b9b9b5;border-bottom:1px solid #b9b9b5;box-sizing:border-box"></div>
<div class="r" style="left:12px;top:645px;width:404px;height:6px;background:#747979;border-radius:3px"></div>
<div class="r" style="left:563px;top:119px;width:1px;height:543px;background:#b2b2b0"></div>
<div class="r" style="left:568px;top:127px;width:281px;height:142px;border:1px solid #b2b2b0;box-shadow:1px 1px 0 #f6f6f5, inset 1px 1px 0 #f6f6f5"></div>
<div class="r" style="left:570px;top:121px;width:36px;height:12px;background:#e8e8e7"></div>
<div class="t" style="left:571.83px;top:120.99px;font-size:13px;color:#383a3b;font-weight:normal;font-family:'Liberation Sans', sans-serif;letter-spacing:0px;transform:scaleX(0.7961);transform-origin:0 0;">Signals</div>
<div class="r" style="left:568px;top:274px;width:281px;height:1px;background:#b2b2b0"></div>
<div class="r" style="left:568px;top:287px;width:281px;height:110px;border:1px solid #b2b2b0;box-shadow:1px 1px 0 #f6f6f5, inset 1px 1px 0 #f6f6f5"></div>
<div class="r" style="left:570px;top:281px;width:39px;height:12px;background:#e8e8e7"></div>
<div class="t" style="left:571.86px;top:280.99px;font-size:13px;color:#383a3b;font-weight:normal;font-family:'Liberation Sans', sans-serif;letter-spacing:0px;transform:scaleX(0.8225);transform-origin:0 0;">Cursors</div>
<div class="r" style="left:568px;top:401px;width:281px;height:1px;background:#b2b2b0"></div>
<div class="r" style="left:568px;top:414px;width:281px;height:245px;border:1px solid #b2b2b0;box-shadow:1px 1px 0 #f6f6f5, inset 1px 1px 0 #f6f6f5"></div>
<div class="r" style="left:570px;top:408px;width:26px;height:12px;background:#e8e8e7"></div>
<div class="t" style="left:572.68px;top:407.89px;font-size:13px;color:#383a3b;font-weight:normal;font-family:'Liberation Sans', sans-serif;letter-spacing:0px;transform:scaleX(0.7510);transform-origin:0 0;">Tune</div>
<div class="r" style="left:575px;top:141px;width:268px;height:122px;background:#fff"></div>
<div class="r" style="left:575px;top:160px;width:268px;height:2px;background:#e0e0e0"></div>
<div class="t" style="left:580.72px;top:145.09px;font-size:12.3px;color:#383a3b;font-weight:normal;font-family:'Liberation Sans', sans-serif;letter-spacing:0px;transform:scaleX(0.8595);transform-origin:0 0;">Signal</div>
<div class="r" style="left:575px;top:162px;width:268px;height:21px;background:#fff;box-shadow:inset 0 0 0 1px #e2e2e2"></div>
<div class="r" style="left:577px;top:170px;width:15px;height:7px;background:#f00"></div>
<div class="t" style="left:597.05px;top:167.59px;font-size:12.3px;color:#1c1c1c;font-weight:normal;font-family:'Liberation Sans', sans-serif;letter-spacing:0px;transform:scaleX(0.9447);transform-origin:0 0;">V(/lowpass)&nbsp;(mag)</div>
<div class="r" style="left:577px;top:192px;width:15px;height:7px;background:#00e600"></div>
<div class="t" style="left:597.05px;top:189.39px;font-size:12.3px;color:#1c1c1c;font-weight:normal;font-family:'Liberation Sans', sans-serif;letter-spacing:0px;transform:scaleX(0.9239);transform-origin:0 0;">V(/lowpass)&nbsp;(phase)</div>
<div class="r" style="left:575px;top:301px;width:268px;height:89px;background:#fff"></div>
<div class="r" style="left:575px;top:321px;width:268px;height:2px;background:#e0e0e0"></div>
<div class="r" style="left:708px;top:301px;width:1px;height:20px;background:#e6e6e6"></div>
<div class="r" style="left:775px;top:301px;width:1px;height:20px;background:#e6e6e6"></div>
<div class="t" style="left:580.72px;top:305.49px;font-size:12.3px;color:#383a3b;font-weight:normal;font-family:'Liberation Sans', sans-serif;letter-spacing:0px;transform:scaleX(0.8625);transform-origin:0 0;">Signal</div>
<div class="t" style="left:714.64px;top:305.39px;font-size:12.3px;color:#383a3b;font-weight:normal;font-family:'Liberation Sans', sans-serif;letter-spacing:0px;transform:scaleX(0.8532);transform-origin:0 0;">Frequency</div>
<div class="r" style="left:776px;top:301px;width:66px;height:20px;overflow:hidden">
<div class="t" style="left:6.06px;top:4.39px;font-size:12.3px;color:#383a3b;font-weight:normal;font-family:'Liberation Sans', sans-serif;letter-spacing:0px;transform:scaleX(0.8793);transform-origin:0 0;">Gain&nbsp;/&nbsp;Phase</div>
</div>
<div class="r" style="left:575px;top:323px;width:268px;height:21px;background:#fff;box-shadow:inset 0 0 0 1px #e2e2e2"></div>
<div class="r" style="left:577px;top:330px;width:15px;height:7px;background:#f00"></div>
<div class="t" style="left:597.15px;top:326.99px;font-size:12.3px;color:#1c1c1c;font-weight:normal;font-family:'Liberation Sans', sans-serif;letter-spacing:0px;transform:scaleX(0.9447);transform-origin:0 0;">V(/lowpass)&nbsp;(mag)</div>
<div class="t" style="left:710.65px;top:326.89px;font-size:12.3px;color:#1c1c1c;font-weight:normal;font-family:'Liberation Sans', sans-serif;letter-spacing:0px;transform:scaleX(0.8938);transform-origin:0 0;">4.75794k</div>
<div class="t" style="left:778.34px;top:326.89px;font-size:12.3px;color:#1c1c1c;font-weight:normal;font-family:'Liberation Sans', sans-serif;letter-spacing:0px;transform:scaleX(0.8416);transform-origin:0 0;">-19.8901</div>
<div class="t" style="left:578.85px;top:441.79px;font-size:13px;color:#383a3b;font-weight:normal;font-family:'Liberation Sans', sans-serif;letter-spacing:0px;transform:scaleX(0.8298);transform-origin:0 0;">C2</div>
<div class="t" style="left:675.70px;top:441.79px;font-size:13px;color:#383a3b;font-weight:normal;font-family:'Liberation Sans', sans-serif;letter-spacing:0px;transform:scaleX(0.8458);transform-origin:0 0;">R2</div>
<div class="r" style="left:629px;top:433px;width:24px;height:28px;border:1px solid #a6a6a4;border-radius:3px;background:linear-gradient(#f2f2f1,#d9d9d8);"></div>
<div class="t" style="left:638.67px;top:441.79px;font-size:13px;color:#383a3b;font-weight:normal;font-family:'Liberation Sans', sans-serif;letter-spacing:0px;transform:scaleX(0.8019);transform-origin:0 0;">X</div>
<div class="r" style="left:726px;top:433px;width:24px;height:28px;border:1px solid #a6a6a4;border-radius:3px;background:linear-gradient(#f2f2f1,#d9d9d8);"></div>
<div class="t" style="left:735.77px;top:441.79px;font-size:13px;color:#383a3b;font-weight:normal;font-family:'Liberation Sans', sans-serif;letter-spacing:0px;transform:scaleX(0.8019);transform-origin:0 0;">X</div>
<div class="r" style="left:582px;top:485px;width:4px;height:117px;background:#c0c0be;border-radius:2px"></div>
<div class="r" style="left:582px;top:563px;width:4px;height:39px;background:#3a6db5;border-radius:2px"></div>
<div class="r" style="left:574px;top:553px;width:18px;height:18px;border-radius:50%;border:1px solid #989896;background:linear-gradient(#fbfbfb,#dcdcdb)"></div>
<div class="r" style="left:605px;top:480px;width:60px;height:29px;background:#fff;border:1px solid #b4b4b2;border-right:none;border-radius:3px 0 0 3px;"></div>
<div class="r" style="left:605px;top:527px;width:60px;height:29px;background:#fff;border:1px solid #b4b4b2;border-right:none;border-radius:3px 0 0 3px;"></div>
<div class="r" style="left:605px;top:575px;width:60px;height:29px;background:#fff;border:1px solid #b4b4b2;border-right:none;border-radius:3px 0 0 3px;"></div>
<div class="r" style="left:679px;top:485px;width:4px;height:117px;background:#c0c0be;border-radius:2px"></div>
<div class="r" style="left:679px;top:563px;width:4px;height:39px;background:#3a6db5;border-radius:2px"></div>
<div class="r" style="left:671px;top:553px;width:18px;height:18px;border-radius:50%;border:1px solid #989896;background:linear-gradient(#fbfbfb,#dcdcdb)"></div>
<div class="r" style="left:702px;top:480px;width:60px;height:29px;background:#fff;border:1px solid #b4b4b2;border-right:none;border-radius:3px 0 0 3px;"></div>
<div class="r" style="left:702px;top:527px;width:60px;height:29px;background:#fff;border:1px solid #b4b4b2;border-right:none;border-radius:3px 0 0 3px;"></div>
<div class="r" style="left:702px;top:575px;width:60px;height:29px;background:#fff;border:1px solid #b4b4b2;border-right:none;border-radius:3px 0 0 3px;"></div>
<div class="t" style="left:614.17px;top:488.89px;font-size:13px;color:#1c1c1c;font-weight:normal;font-family:'Liberation Sans', sans-serif;letter-spacing:0px;transform:scaleX(0.9664);transform-origin:0 0;">200n</div>
<div class="t" style="left:613.94px;top:536.09px;font-size:13px;color:#1c1c1c;font-weight:normal;font-family:'Liberation Sans', sans-serif;letter-spacing:0px;transform:scaleX(0.8713);transform-origin:0 0;">100n</div>
<div class="t" style="left:614.31px;top:583.99px;font-size:13px;color:#1c1c1c;font-weight:normal;font-family:'Liberation Sans', sans-serif;letter-spacing:0px;transform:scaleX(0.9496);transform-origin:0 0;">50n</div>
<div class="t" style="left:711.19px;top:488.79px;font-size:13px;color:#1c1c1c;font-weight:normal;font-family:'Liberation Sans', sans-serif;letter-spacing:0px;transform:scaleX(0.9316);transform-origin:0 0;">2k</div>
<div class="t" style="left:711.49px;top:536.09px;font-size:13px;color:#1c1c1c;font-weight:normal;font-family:'Liberation Sans', sans-serif;letter-spacing:0px;transform:scaleX(0.8230);transform-origin:0 0;">1k</div>
<div class="t" style="left:711.40px;top:583.99px;font-size:13px;color:#1c1c1c;font-weight:normal;font-family:'Liberation Sans', sans-serif;letter-spacing:0px;transform:scaleX(0.9535);transform-origin:0 0;">500</div>
<div class="r" style="left:575px;top:619px;width:81px;height:32px;border:1px solid #a6a6a4;border-radius:3px;background:linear-gradient(#f2f2f1,#d9d9d8);"></div>
<div class="t" style="left:604.74px;top:629.79px;font-size:13px;color:#383a3b;font-weight:normal;font-family:'Liberation Sans', sans-serif;letter-spacing:0px;transform:scaleX(0.7835);transform-origin:0 0;">Save</div>
<div class="r" style="left:672px;top:619px;width:81px;height:32px;border:1px solid #a6a6a4;border-radius:3px;background:linear-gradient(#f2f2f1,#d9d9d8);"></div>
<div class="t" style="left:701.53px;top:629.79px;font-size:13px;color:#383a3b;font-weight:normal;font-family:'Liberation Sans', sans-serif;letter-spacing:0px;transform:scaleX(0.7975);transform-origin:0 0;">Save</div>
<div class="r" style="left:363.0px;top:60.900000000000006px;width:43px;height:43px;border-radius:50%;background:#0066ff;"></div>
<svg class="r" style="left:0;top:0" width="853" height="663"><path d="M376.8,70.3 L383,69.2 L386.4,69.2 L386.4,92 L392.1,92 L392.1,95 L377,95 L377,92 L383,92 L383,72.2 L376.8,73.3 Z" fill="#fff"/></svg>
<div class="r" style="left:29.0px;top:167.1px;width:43px;height:43px;border-radius:50%;background:#0066ff;"></div>
<div class="t" style="left:40.99px;top:170.92px;font-size:36px;color:#fff;transform:scaleX(1.0);transform-origin:0 0;">2</div>
<div class="r" style="left:494.0px;top:467.9px;width:43px;height:43px;border-radius:50%;background:#0066ff;"></div>
<div class="t" style="left:505.59px;top:471.72px;font-size:36px;color:#fff;transform:scaleX(1.0);transform-origin:0 0;">3</div>
<div class="r" style="left:785.1px;top:145.9px;width:43px;height:43px;border-radius:50%;background:#0066ff;"></div>
<div class="t" style="left:794.50px;top:149.72px;font-size:36px;color:#fff;transform:scaleX(1.0);transform-origin:0 0;">4</div>
<div class="r" style="left:791.0px;top:346.0px;width:43px;height:43px;border-radius:50%;background:#0066ff;"></div>
<div class="t" style="left:803.02px;top:350.32px;font-size:36px;color:#fff;transform:scaleX(1.0);transform-origin:0 0;">5</div>
<div class="r" style="left:790.1px;top:435.9px;width:43px;height:43px;border-radius:50%;background:#0066ff;"></div>
<div class="t" style="left:801.47px;top:440.72px;font-size:36px;color:#fff;transform:scaleX(1.0);transform-origin:0 0;">6</div>
</body></html>
